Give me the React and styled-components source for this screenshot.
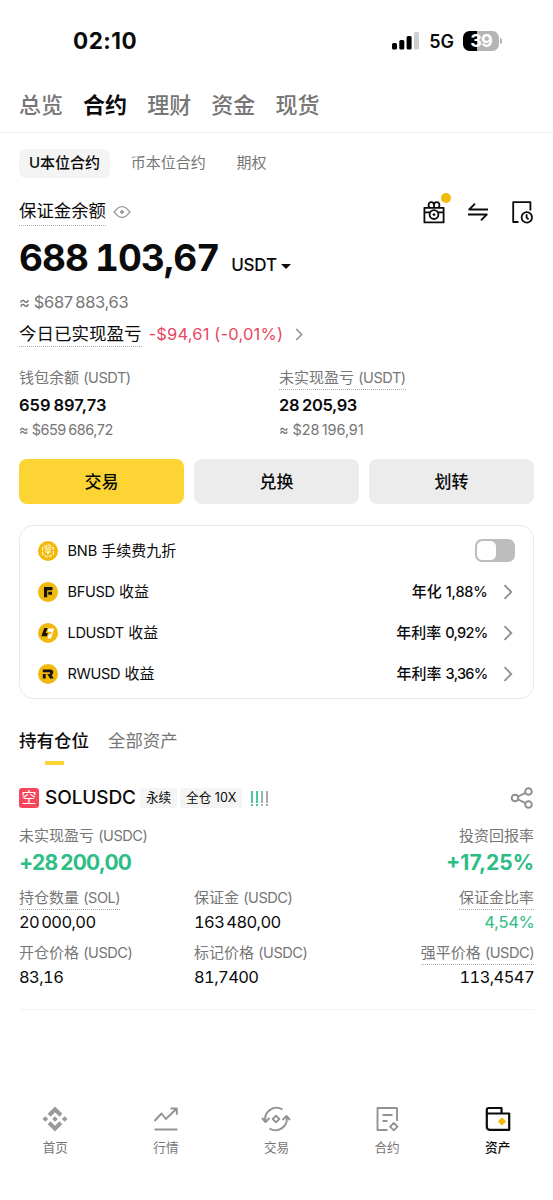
import React from "react";
import styled, { createGlobalStyle } from "styled-components";

const Global = createGlobalStyle`
  *, *::before, *::after { box-sizing: border-box; }
  body {
    margin: 0;
    background: #fff;
    color: #0b0b0c;
    font-family: Inter, "Noto Sans CJK SC", sans-serif;
  }
  svg { display: block; flex: none; }
`;

const Screen = styled.div`
  width: 553px;
  height: 1200px;
  overflow: hidden;
  display: flex;
  flex-direction: column;
  background: #fff;
`;

const Text = styled.span`
  display: block;
  white-space: nowrap;
  font-size: ${(p) => p.$size || 15}px;
  line-height: ${(p) => p.$line || 24}px;
  font-weight: ${(p) => p.$weight || 400};
  color: ${(p) => p.$color || "#0b0b0c"};
  letter-spacing: ${(p) => p.$track || 0}px;
  font-variant-numeric: ${(p) => (p.$tab ? "tabular-nums" : "normal")};
`;

const Dotted = styled(Text)`
  width: fit-content;
  border-bottom: 1px dotted #aeaeae;
`;

const Gap = styled.i`
  display: inline-block;
  width: ${(p) => p.$w}px;
`;

const LatinRun = styled.span`
  font-size: 0.97em;
  letter-spacing: ${(p) => p.$em}em;
`;

/* Tightens the Latin runs of a mixed Chinese and Latin string */
const Mixed = ({ children, em = -0.032 }) =>
  children
    .split(/([\x21-\x7e]+)/)
    .map((part, i) => (i % 2 ? <LatinRun key={i} $em={em}>{part}</LatinRun> : part));

const GREY = "#767676";
const GREEN = "#2ebd85";
const RED = "#e8475f";

/* Status bar */
const StatusBar = styled.div`
  height: 82px;
  flex: none;
  display: flex;
  align-items: center;
  justify-content: space-between;
  padding: 0 51px 0 73px;
`;
const StatusRight = styled.div`
  display: flex;
  align-items: center;
`;
const Network = styled(Text)`
  margin: 1px 9px 0 9px;
`;
const Battery = styled.div`
  width: 36px;
  height: 20px;
  border-radius: 6.5px;
  background: linear-gradient(90deg, #000 39%, #b5b5b5 39%);
  color: #fff;
  font-size: 18px;
  font-weight: 700;
  line-height: 20px;
  text-align: center;
  letter-spacing: -0.9px;
`;
const BatteryTip = styled.div`
  width: 2px;
  height: 6px;
  margin-left: 1px;
  border-radius: 0 2px 2px 0;
  background: #b5b5b5;
`;

/* Header tabs */
const MainTabs = styled.nav`
  height: 51px;
  flex: none;
  display: flex;
  gap: 20.1px;
  padding: 7px 19px 0;
  border-bottom: 1px solid #f1f1f1;
`;

const Content = styled.main`
  flex: 1;
  display: flex;
  flex-direction: column;
  padding: 16px 19px 0;
`;

const Pills = styled.div`
  display: flex;
  gap: 10.7px;
`;
const Pill = styled.div`
  height: 29px;
  padding: 0 10px;
  border-radius: 7px;
  background: ${(p) => (p.$on ? "#f4f4f4" : "transparent")};
`;

const BalanceHead = styled.div`
  display: flex;
  justify-content: space-between;
  height: 48px;
  margin-top: 19px;
`;
const Inline = styled.div`
  display: flex;
  align-items: ${(p) => p.$align || "center"};
  gap: ${(p) => p.$gap || 0}px;
  height: ${(p) => (p.$h ? p.$h + "px" : "auto")};
`;
const Tools = styled.div`
  display: flex;
  gap: 20px;
  padding-top: 3px;
`;
const ToolIcon = styled.div`
  position: relative;
`;
const Dot = styled.i`
  position: absolute;
  top: -7px;
  right: -5px;
  width: 10px;
  height: 10px;
  border-radius: 50%;
  background: #f0b90b;
`;
const Balance = styled.div`
  display: flex;
  align-items: baseline;
  height: 44px;
  margin-top: -9.5px;
`;
const Currency = styled(Text)`
  margin-left: 12px;
`;
const Caret = styled.i`
  align-self: center;
  margin: 17px 0 0 4px;
  border: 5px solid transparent;
  border-top-color: #0b0b0c;
  border-bottom: 0;
`;
const Approx = styled(Text)`
  margin: 10.5px 0 7px;
`;
const Today = styled.div`
  display: flex;
  align-items: center;
`;
const TodayValue = styled(Text)`
  margin: 0 12px 0 7px;
`;

const Wallets = styled.section`
  display: grid;
  grid-template-columns: 260px 1fr;
  margin-top: 19px;
`;

const Actions = styled.div`
  display: grid;
  grid-template-columns: repeat(3, 1fr);
  gap: 10px;
  margin-top: 20px;
`;
const Action = styled.button`
  height: 45px;
  border: 0;
  padding: 0;
  border-radius: 8px;
  background: ${(p) => (p.$primary ? "#fcd535" : "#ececec")};
  color: #0b0b0c;
  font: 500 17px/44px Inter, "Noto Sans CJK SC", sans-serif;
`;

const Card = styled.section`
  height: 174px;
  margin-top: 21px;
  padding: 4px 18px 4px 17.5px;
  border: 1px solid #e9e9e9;
  border-radius: 14px;
`;
const EarnRow = styled.div`
  height: 41px;
  display: flex;
  align-items: center;
`;
const EarnName = styled(Text)`
  margin-left: 10px;
  flex: 1;
`;
const Toggle = styled.div`
  width: 40px;
  height: 23px;
  padding: 2px;
  border-radius: 7px;
  background: #bdbdbd;
  &::before {
    content: "";
    display: block;
    width: 19px;
    height: 19px;
    border-radius: 5.5px;
    background: #fff;
  }
`;
const RowArrow = styled.div`
  margin: 0 2.5px 0 15px;
`;

const SubTabs = styled.div`
  display: flex;
  gap: 19px;
  margin-top: 28px;
  height: 38px;
`;
const SubTab = styled.div`
  display: flex;
  flex-direction: column;
  align-items: center;
`;
const Marker = styled.i`
  width: 19px;
  height: 4px;
  margin-top: 6.5px;
  background: #fcd535;
`;

const PositionHead = styled.div`
  display: flex;
  align-items: center;
  height: 24px;
  margin-top: 21px;
`;
const Side = styled.div`
  width: 20px;
  height: 20px;
  margin-right: 6px;
  border-radius: 3px;
  background: #f6465d;
  color: #fff;
  font-size: 15px;
  line-height: 19px;
  text-align: center;
`;
const Tag = styled.div`
  height: 20px;
  padding: 0 6px;
  margin-left: ${(p) => p.$ml}px;
  border-radius: 3px;
  background: #f4f4f4;
`;
const Grow = styled.div`
  flex: 1;
`;
const Risk = styled.div`
  display: flex;
  gap: 3px;
  margin-left: 8.500px;
`;
const Bang = styled.i`
  width: 2px;
  height: 15px;
  opacity: 0.85;
  background: linear-gradient(
    ${(p) => p.$c} 12px, transparent 12px, transparent 13.4px, ${(p) => p.$c} 13.4px
  );
`;

const Profit = styled.div`
  display: flex;
  justify-content: space-between;
  margin-top: 14px;
`;
const Cell = styled.div`
  display: flex;
  flex-direction: column;
  align-items: ${(p) => (p.$end ? "flex-end" : "flex-start")};
`;
const Stats = styled.div`
  display: grid;
  grid-template-columns: 175px 1fr 1fr;
  row-gap: 6px;
  padding-bottom: 19px;
  margin-top: 8px;
  border-bottom: 1px solid #f3f3f3;
`;
const CellLabel = styled(Dotted)`
  height: 24px;
  border-bottom-color: ${(p) => (p.$hint ? "#aeaeae" : "transparent")};
`;

const BottomNav = styled.nav`
  height: 99px;
  flex: none;
  display: grid;
  grid-template-columns: repeat(5, 1fr);
`;
const NavItem = styled.div`
  display: flex;
  flex-direction: column;
  align-items: center;
  padding-top: 5px;
  gap: 4px;
`;

const Line = ({ size = 24, w = 1.8, color = "#0b0b0c", box = 24, children }) => (
  <svg width={size} height={size} viewBox={`0 0 ${box} ${box}`} fill="none" stroke={color} strokeWidth={w} strokeLinejoin="round">
    {children}
  </svg>
);

const Signal = () => (
  <svg width="28" height="18" viewBox="0 0 28 18">
    <rect x="0" y="11" width="5" height="6.5" rx="1.5" />
    <rect x="7.3" y="8" width="5" height="9.5" rx="1.5" />
    <rect x="14.6" y="4" width="5" height="13.5" rx="1.5" />
    <rect x="22" y="0" width="5" height="17.5" rx="1.5" fill="#cfcfcf" />
  </svg>
);
const Eye = () => (
  <svg width="18" height="14" viewBox="0 0 18 14" fill="none" stroke="#9b9b9b" strokeWidth="1.4">
    <path d="M1 7 L5 3 Q9 0.2 13 3 L17 7 L13 11 Q9 13.8 5 11 Z" strokeLinejoin="round" />
    <path d="M9 4.6 L11.4 7 L9 9.4 L6.6 7 Z" fill="#9b9b9b" stroke="none" />
  </svg>
);
const Gift = () => (
  <Line>
    <path d="M2.4 7.8h19.2v14.6H2.4zM2.4 12.3h5.8M15.8 12.3h5.8" />
    <path d="M7.4 7.5C5.6 5 6.8 2.2 9.2 2.2c1.9 0 2.8 1.3 2.8 3.1v2.2M16.6 7.5c1.8-2.5.6-5.3-1.8-5.3-1.9 0-2.8 1.3-2.8 3.1" />
    <circle cx="12" cy="14.6" r="4.4" />
    <path d="M12 12.9l1.7 1.7-1.7 1.7-1.7-1.7z" fill="#0b0b0c" stroke="none" />
  </Line>
);
const Swap = () => (
  <Line>
    <path d="M22 9.5H3.2L9 3.7M2 14.5h18.8L15 20.3" />
  </Line>
);
const History = () => (
  <Line>
    <path d="M8.5 22H3.2V2.2h17.2v8.3" />
    <circle cx="16.8" cy="17.4" r="5.2" />
    <path d="M16.6 14.3v3.3l2 1.8" />
  </Line>
);
const Chevron = ({ w = 10, h = 16, sw = 1.8 }) => (
  <svg width={w} height={h} viewBox="0 0 10 16" fill="none" stroke="#8e8e8e" strokeWidth={sw}>
    <path d="M1.5 1.2L8.3 8l-6.8 6.8" />
  </svg>
);
const Coin = ({ children }) => (
  <svg width="20" height="20" viewBox="0 0 20 20">
    <circle cx="10" cy="10" r="10" fill="#f0b90b" />
    {children}
  </svg>
);
const BnbCoin = () => (
  <Coin>
    <g fill="none" stroke="#fff3c4" strokeWidth="1.2">
      <path d="M10 3.6l5.4 3.1v6.6L10 16.4l-5.4-3.1V6.7z" strokeDasharray="3.8 1" />
      <path d="M6.5 7.4L10 9.4l3.5-2M10 9.4v4.4M7 10.2l3 1.8 3-1.8M7.4 5.7L10 7.2l2.6-1.5" />
    </g>
  </Coin>
);
const BfCoin = () => (
  <Coin>
    <path d="M6 5h8.5v3.2H9.2v7H6zM10.3 9.7h3.7v3h-3.7z" fill="#17130a" />
  </Coin>
);
const LdCoin = () => (
  <Coin>
    <path d="M6.3 5h3.4L7.6 10h2.2l-.9 3.2H3.3z" fill="#17130a" />
    <path d="M10.5 5.6h5.7l-3.2 9.9H9.5l1.5-4.5h2.1l.8-2.3h-4.4z" fill="#fff" />
  </Coin>
);
const RwCoin = () => (
  <Coin>
    <path d="M4.8 5.4h7.5q3 0 3 2.9 0 2.1-1.7 2.7l2.1 3.6h-3.6l-2.9-4.6h2.2q.8 0 .8-.9t-.8-.9H4.8zM4.8 9.9h2.9v4.7H4.8z" fill="#17130a" />
  </Coin>
);
const Share = () => (
  <Line color="#8e8e8e" w={1.9}>
    <circle cx="5" cy="12" r="3.3" />
    <circle cx="18.5" cy="5.5" r="3.3" />
    <circle cx="18.5" cy="18.5" r="3.3" />
    <path d="M8 10.5l7.5-3.6M8 13.5l7.5 3.6" />
  </Line>
);

const HomeIcon = () => (
  <svg width="26" height="26" viewBox="0 0 26 26" fill="#9a9a9a">
    <path d="M13 .5l7.3 7.3-2.9 2.9L13 6.3l-4.4 4.4-2.9-2.9zM13 25.5l7.3-7.3-2.9-2.9-4.4 4.4-4.4-4.4-2.9 2.9zM13 10.2l2.8 2.8-2.8 2.8-2.8-2.8zM3.3 10.2L6.1 13l-2.8 2.8L.5 13zM22.7 10.2l2.8 2.8-2.8 2.8-2.8-2.8z" />
  </svg>
);
const MarketIcon = () => (
  <Line size={26} box={26} color="#939393" w={1.9}>
    <path d="M1.500 15l7-7.500 4.300 5.500L23.500 2.800M17.500 2.500h6.300v6.300M1.500 23.500h23" />
  </Line>
);
const TradeIcon = () => (
  <svg width="30" height="26" viewBox="0 0 30 26" fill="none" stroke="#939393" strokeWidth="1.9" strokeLinejoin="round">
    <path d="M21.5 3.5A11.3 11.3 0 0 0 4.5 15.5M1 12l3.5 4L8.5 12M8.5 22.5A11.3 11.3 0 0 0 25.5 10.5M21.5 14l4-4 3.5 4M15 9.7l3.3 3.3-3.3 3.3-3.3-3.3z" />
  </svg>
);
const ContractIcon = () => (
  <Line size={26} box={26} color="#939393" w={1.9}>
    <path d="M13.5 24H3.5V2h19.5v13M8.5 9H18.5M8.5 15h5M19.8 17l3.7 3.7-3.7 3.7-3.7-3.7z" />
  </Line>
);
const AssetIcon = () => (
  <Line size={26} box={26} w={2.2}>
    <path d="M1.8 7.5V4q0-2 2-2h12.7v5.5H24.2v16.3H4.8q-3 0-3-3zh15" />
    <path d="M17 11.2l4.2 4.2-4.2 4.2-4.2-4.2z" fill="#f0b90b" stroke="none" />
  </Line>
);

const mainTabs = ["总览", "合约", "理财", "资金", "现货"];
const earn = [
  [BfCoin, "BFUSD 收益", "年化 1,88%", -0.015],
  [LdCoin, "LDUSDT 收益", "年利率 0,92%", -0.05],
  [RwCoin, "RWUSD 收益", "年利率 3,36%", -0.05],
];
const stats = [
  ["持仓数量 (SOL)", ["20", "000,00"], true],
  ["保证金 (USDC)", ["163", "480,00"], false],
  ["保证金比率", ["4,54%"], true, GREEN],
  ["开仓价格 (USDC)", ["83,16"], false],
  ["标记价格 (USDC)", ["81,7400"], false],
  ["强平价格 (USDC)", ["113,4547"], true],
];
const nav = [
  [HomeIcon, "首页"],
  [MarketIcon, "行情"],
  [TradeIcon, "交易"],
  [ContractIcon, "合约"],
  [AssetIcon, "资产"],
];

export default function App() {
  return (
    <Screen>
      <Global />
      <StatusBar>
        <Text $size={22.5} $weight={700} $track={0.5}>02:10</Text>
        <StatusRight>
          <Signal />
          <Network $size={18} $weight={600}>5G</Network>
          <Battery>39</Battery>
          <BatteryTip />
        </StatusRight>
      </StatusBar>
      <MainTabs>
        {mainTabs.map((t, i) => (
          <Text key={t} $size={22} $line={33} $weight={i === 1 ? 700 : 500} $color={i === 1 ? "#0b0b0c" : GREY}>{t}</Text>
        ))}
      </MainTabs>
      <Content>
        <Pills>
          <Pill $on><Text $size={15} $line={28} $weight={500}>U本位合约</Text></Pill>
          <Pill><Text $line={28} $color={GREY}>币本位合约</Text></Pill>
          <Pill><Text $line={28} $color={GREY}>期权</Text></Pill>
        </Pills>
        <BalanceHead>
          <Inline $gap={7} $align="flex-start" $h={29}>
            <Dotted $size={17.4} $line={28}>保证金余额</Dotted>
            <Inline $h={29}><Eye /></Inline>
          </Inline>
          <Tools>
            <ToolIcon><Gift /><Dot /></ToolIcon>
            <Swap />
            <History />
          </Tools>
        </BalanceHead>
        <Balance>
          <Text $tab $size={37} $line={44} $weight={700} $track={-0.9}>688<Gap $w={7} />103,67</Text>
          <Currency $size={17} $weight={500} $track={-0.2}>USDT</Currency>
          <Caret />
        </Balance>
        <Approx $size={16.5} $track={-0.35} $color={GREY}>≈ $687<Gap $w={2.5} />883,63</Approx>
        <Today>
          <Dotted $size={17.5} $line={25}>今日已实现盈亏</Dotted>
          <TodayValue $size={16.5} $track={0.18} $color={RED}>-$94,61 (-0,01%)</TodayValue>
          <Chevron w={8} h={13} sw={1.9} />
        </Today>
        <Wallets>
          <Cell>
            <CellLabel $line={23} $color={GREY}><Mixed>钱包余额 (USDT)</Mixed></CellLabel>
            <Text $size={16.5} $line={30} $weight={600}>659<Gap $w={3} />897,73</Text>
            <Text $size={14.5} $line={19} $track={-0.5} $color={GREY}>≈ $659<Gap $w={2.5} />686,72</Text>
          </Cell>
          <Cell>
            <CellLabel $line={23} $color={GREY} $hint><Mixed>未实现盈亏 (USDT)</Mixed></CellLabel>
            <Text $size={16.5} $line={30} $weight={600} $track={-0.4}>28<Gap $w={3} />205,93</Text>
            <Text $size={14.5} $line={19} $track={-0.1} $color={GREY}>≈ $28<Gap $w={2.5} />196,91</Text>
          </Cell>
        </Wallets>
        <Actions>
          <Action $primary>交易</Action>
          <Action>兑换</Action>
          <Action>划转</Action>
        </Actions>
        <Card>
          <EarnRow>
            <BnbCoin />
            <EarnName><Mixed em={-0.01}>BNB 手续费九折</Mixed></EarnName>
            <Toggle />
          </EarnRow>
          {earn.map(([Icon, name, rate, em]) => (
            <EarnRow key={name}>
              <Icon />
              <EarnName><Mixed em={-0.022}>{name}</Mixed></EarnName>
              <Text $weight={500}><Mixed em={em}>{rate}</Mixed></Text>
              <RowArrow><Chevron /></RowArrow>
            </EarnRow>
          ))}
        </Card>
        <SubTabs>
          <SubTab><Text $size={17.5} $line={27} $weight={500}>持有仓位</Text><Marker /></SubTab>
          <SubTab><Text $size={17.4} $line={27} $color={GREY}>全部资产</Text></SubTab>
        </SubTabs>
        <PositionHead>
          <Side>空</Side>
          <Text $size={19} $weight={500} $track={-0.1}>SOLUSDC</Text>
          <Tag $ml={4}><Text $size={12.6} $line={19}>永续</Text></Tag>
          <Tag $ml={3}><Text $size={12.6} $line={19}>全仓 10X</Text></Tag>
          <Risk><Bang $c={GREEN} /><Bang $c={GREEN} /><Bang $c="#7dae9a" /><Bang $c="#9a9a9a" /></Risk>
          <Grow />
          <Share />
        </PositionHead>
        <Profit>
          <Cell>
            <Text $color={GREY}><Mixed>未实现盈亏 (USDC)</Mixed></Text>
            <Text $size={21} $line={30} $weight={700} $track={-0.8} $color={GREEN}>+28<Gap $w={3} />200,00</Text>
          </Cell>
          <Cell $end>
            <Text $color={GREY}>投资回报率</Text>
            <Text $size={21} $line={30} $weight={700} $color={GREEN}>+17,25%</Text>
          </Cell>
        </Profit>
        <Stats>
          {stats.map(([label, parts, hint, color], i) => (
            <Cell key={label} $end={i % 3 === 2}>
              <CellLabel $line={23} $color={GREY} $hint={hint}><Mixed>{label}</Mixed></CellLabel>
              <Text $tab $size={16.5} $line={25} $track={-0.6} $color={color}>{parts[0]}{parts[1] && <><Gap $w={2} />{parts[1]}</>}</Text>
            </Cell>
          ))}
        </Stats>
      </Content>
      <BottomNav>
        {nav.map(([Icon, label], i) => (
          <NavItem key={label}>
            <Icon />
            <Text $size={12.6} $weight={i === 4 ? 500 : 400} $color={i === 4 ? "#0b0b0c" : GREY}>{label}</Text>
          </NavItem>
        ))}
      </BottomNav>
    </Screen>
  );
}
